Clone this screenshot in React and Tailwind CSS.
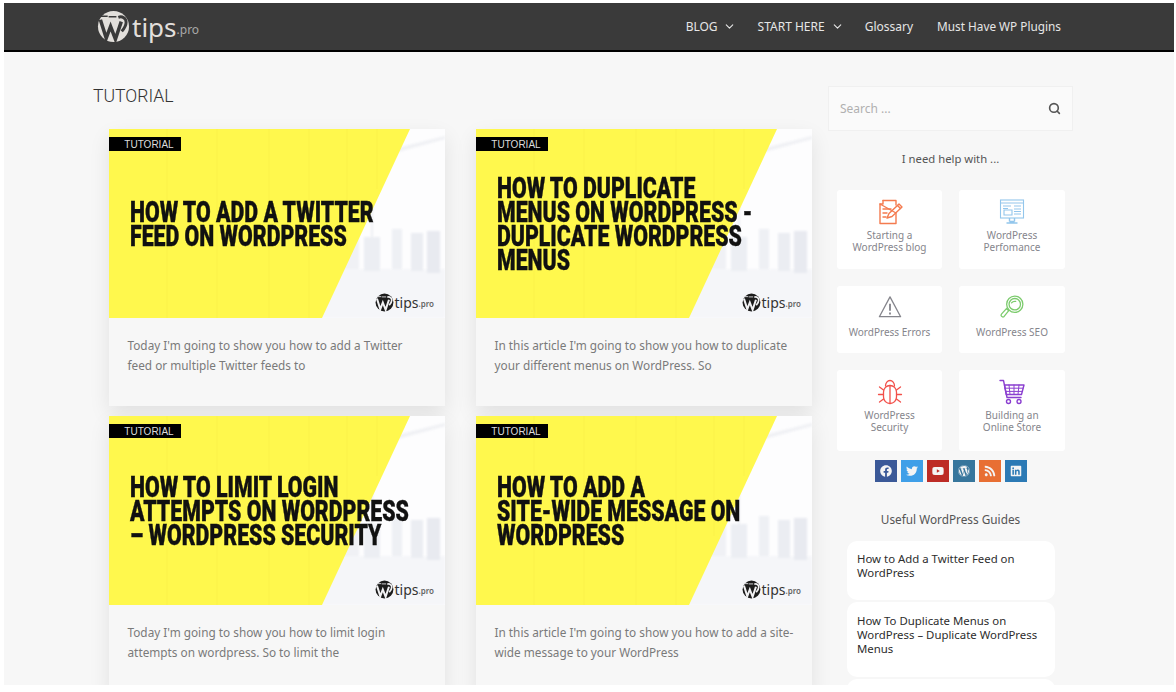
import React from "react";
import { ChevronDown, Search } from "lucide-react";
import { FaFacebook, FaTwitter, FaYoutube, FaWordpress, FaRss, FaLinkedin } from "react-icons/fa";

const posts = [
  {
    title: ["HOW TO ADD A TWITTER", "FEED ON WORDPRESS"],
    text: ["Today I'm going to show you how to add a Twitter", "feed or multiple Twitter feeds to"],
  },
  {
    title: ["HOW TO DUPLICATE", "MENUS ON WORDPRESS -", "DUPLICATE WORDPRESS", "MENUS"],
    text: ["In this article I'm going to show you how to duplicate", "your different menus on WordPress. So"],
  },
  {
    title: ["HOW TO LIMIT LOGIN", "ATTEMPTS ON WORDPRESS", "– WORDPRESS SECURITY"],
    text: ["Today I'm going to show you how to limit login", "attempts on wordpress. So to limit the"],
  },
  {
    title: ["HOW TO ADD A", "SITE-WIDE MESSAGE ON", "WORDPRESS"],
    text: ["In this article I'm going to show you how to add a site-", "wide message to your WordPress"],
  },
];

// disc with the W cut in, the site logo
const LogoMark = ({ disc, ink, className }) => (
  <svg viewBox="0 0 34 34" className={className}>
    <circle cx="17" cy="17" r="16" fill={disc} />
    <path d="M3.5 10L9.5 29L14 17L19 30L25 12" fill="none" stroke={ink} strokeWidth="3.6" strokeLinejoin="miter" />
    <path d="M22 7.5C26 6 30 8.5 30 12.5C30 16 28 19 25.5 22" fill="none" stroke={ink} strokeWidth="3" />
    <path d="M1 6.5H11M12 7H20" stroke={ink} strokeWidth="1.5" />
  </svg>
);

// thin outline drawings from the help tiles
const WriteIcon = () => (
  <svg viewBox="0 0 26 26" className="mb-[4px] h-[26px] w-[26px]" fill="none" stroke="#f47b4f" strokeWidth="1.4" strokeLinejoin="round" strokeLinecap="round">
    <path d="M6 1.5H19V6M19 14V24.5H3V5Z" />
    <path d="M6 1.5V5H3" />
    <path d="M10 19L12 14.5L22 5L25 8L15 17.5Z" />
    <path d="M20.5 6.5L23.5 9.5" />
    <path d="M6 10H14M6 14H10M6 18H9" />
  </svg>
);

const MonitorIcon = () => (
  <svg viewBox="0 0 26 26" className="mb-[4px] h-[26px] w-[26px]" fill="none" stroke="#93c6ec" strokeWidth="1.1">
    <rect x="1.5" y="1" width="23" height="18" />
    <path d="M1.5 4H24.5M4 7H12M15 7H22M4 9.5H9M5 11H13V16H5ZM15 10H22M15 12.5H22M15 15H22" />
    <path d="M10.5 19V22.5M15.5 19V22.5M7.5 24H18.5M10.5 22.5H15.5" strokeWidth="1.4" />
  </svg>
);

const WarningIcon = () => (
  <svg viewBox="0 0 26 26" className="mb-[7px] h-[24px] w-[24px]" fill="none" stroke="#85858c" strokeWidth="1.4" strokeLinejoin="round">
    <path d="M13 2L24.5 23.5H1.5Z" />
    <path d="M13 9.5V17M13 19V21" strokeWidth="2" />
  </svg>
);

const SeoIcon = () => (
  <svg viewBox="0 0 26 26" className="mb-[7px] h-[24px] w-[24px]" fill="none" stroke="#7ccb6d" strokeWidth="1.4" strokeLinecap="round">
    <circle cx="16" cy="10" r="8.8" />
    <circle cx="16" cy="10" r="6.2" />
    <path d="M12.5 8.5C13.5 7.2 15 6.8 17 7" />
    <path d="M9.5 17L7 14.8L1.8 20.5C1 21.4 1 22.4 1.8 23.2C2.6 24 3.6 24 4.5 23.2Z" />
  </svg>
);

const BugIcon = () => (
  <svg viewBox="0 0 26 26" className="mb-[4px] h-[26px] w-[26px]" fill="none" stroke="#f2504a" strokeWidth="1.3" strokeLinecap="round">
    <rect x="6.5" y="6.5" width="13" height="18" rx="6.5" />
    <path d="M13 6.5V24.5" />
    <path d="M8.5 7C8.5 4 10.5 1.5 13 1.5C15.5 1.5 17.5 4 17.5 7" />
    <path d="M6.5 11L2.5 8M5.8 15.5H1.5M6.5 20L2.5 23M19.5 11L23.5 8M20.2 15.5H24.5M19.5 20L23.5 23" />
  </svg>
);

const CartIcon = () => (
  <svg viewBox="0 0 26 26" className="mb-[4px] h-[26px] w-[26px]" fill="none" stroke="#8b3fd0" strokeWidth="1.4" strokeLinejoin="round" strokeLinecap="round">
    <path d="M1 1.5H4.5L8 18.5H22" />
    <path d="M5.5 6H25L22.5 15.5H7.2Z" />
    <path d="M5.8 9.2H24M6.5 12.4H23.2M10 6L11 15.5M15 6V15.5M20 6L19 15.5" strokeWidth="1" />
    <circle cx="9.5" cy="22.5" r="2" />
    <circle cx="20" cy="22.5" r="2" />
  </svg>
);

const helpRows = [
  {
    height: "h-[79px]",
    items: [
      { icon: WriteIcon, label: ["Starting a", "WordPress blog"] },
      { icon: MonitorIcon, label: ["WordPress", "Perfomance"] },
    ],
  },
  {
    height: "h-[67px]",
    items: [
      { icon: WarningIcon, label: ["WordPress Errors"] },
      { icon: SeoIcon, label: ["WordPress SEO"] },
    ],
  },
  {
    height: "h-[81px]",
    items: [
      { icon: BugIcon, label: ["WordPress", "Security"] },
      { icon: CartIcon, label: ["Building an", "Online Store"] },
    ],
  },
];

const socials = [
  { icon: FaFacebook, bg: "bg-[#3b5998]" },
  { icon: FaTwitter, bg: "bg-[#3f9fe8]" },
  { icon: FaYoutube, bg: "bg-[#bd2c26]" },
  { icon: FaWordpress, bg: "bg-[#37769c]" },
  { icon: FaRss, bg: "bg-[#e86f33]" },
  { icon: FaLinkedin, bg: "bg-[#2c7ab5]" },
];

const PostArt = () => (
  <svg className="absolute inset-0 h-full w-full" viewBox="0 0 336 189" preserveAspectRatio="none">
    <rect width="336" height="189" fill="#fdfdfe" />
    <g className="blur-[1px]">
      <rect x="180" y="140" width="156" height="49" fill="#f5f6f9" />
      <path d="M245 30 L336 7 L336 10 L245 35 Z" fill="#eff0f4" />
      <rect x="262" y="28" width="2" height="110" fill="#eff0f4" />
      <rect x="205" y="108" width="14" height="32" fill="#eef0f4" />
      <rect x="232" y="92" width="18" height="48" fill="#f0f1f5" />
      <rect x="255" y="108" width="16" height="34" fill="#eceef3" />
      <rect x="283" y="100" width="10" height="40" fill="#eef0f4" />
      <rect x="302" y="104" width="12" height="38" fill="#ebedf2" />
      <rect x="318" y="102" width="13" height="42" fill="#e8eaf0" />
    </g>
    <path d="M301 0 L213 189 L0 189 L0 0 Z" fill="#fff84d" />
    <path d="M58 0V189M108 0V189M160 0V189M200 0V189M238 0V120M268 0V60" stroke="#fbf24a" strokeWidth="1" />
  </svg>
);

const PostCard = ({ post }) => (
  <article className="h-[277px] w-[336px] shrink-0 bg-[#f7f7f7] shadow-[0_8px_20px_rgba(0,0,0,0.09)]">
    <div className="relative flex h-[189px] items-center overflow-hidden pl-[21px]">
      <PostArt />
      <div className="absolute left-0 top-[8px] flex h-[14px] w-[72px] items-center justify-center bg-black pl-[8px] font-['Liberation_Sans'] text-[10px] text-[#dcdcdc]">
        TUTORIAL
      </div>
      <h2 className="relative font-['Roboto'] text-[30px] font-black leading-[24px] text-[#111] [-webkit-text-stroke:0.4px_#111]">
        {post.title.map((line) => (
          <span key={line} className="block origin-left scale-x-[0.71] whitespace-nowrap">
            {line}
          </span>
        ))}
      </h2>
      <div className="absolute bottom-[6px] right-[11px] flex items-center">
        <LogoMark disc="#1c1c1c" ink="#f2f2f4" className="mr-[1px] h-[19px] w-[19px]" />
        <span className="font-['Noto_Sans'] text-[14px] leading-none text-[#333]">tips</span>
        <span className="mt-[3px] font-['Noto_Sans'] text-[8px] font-semibold leading-none text-[#666]">.pro</span>
      </div>
    </div>
    <p className="pl-[18.5px] pt-[17px] font-['Noto_Sans'] text-[11.8px] leading-[20px] text-[#7a7a7a]">
      {post.text.map((line) => (
        <span key={line} className="block whitespace-nowrap">
          {line}
        </span>
      ))}
    </p>
  </article>
);

const App = () => {
  return (
    <div className="h-[692px] w-[1176px] overflow-hidden bg-white pl-[4px] pr-[2px] pt-[3px] font-['Noto_Sans']">
      <header className="flex h-[49px] items-center justify-between border-b-2 border-black bg-[#3a3a3a] pl-[93px] pr-[113px]">
        <div className="flex items-center">
          <LogoMark disc="#e2dfdb" ink="#3a3a3a" className="h-[33px] w-[33px]" />
          <span className="ml-[2px] text-[26px] leading-none text-[#e2dfdb]">tips</span>
          <span className="mt-[7px] text-[12px] leading-none text-[#a9a9a9]">.pro</span>
        </div>
        <nav className="flex items-center text-[12px] text-[#e6e6e6]">
          <span>BLOG</span>
          <ChevronDown className="ml-[5px] mr-[22px] h-[13px] w-[13px]" />
          <span>START HERE</span>
          <ChevronDown className="ml-[6px] mr-[21px] h-[13px] w-[13px]" />
          <span className="mr-[24px]">Glossary</span>
          <span className="text-[11.8px]">Must Have WP Plugins</span>
        </nav>
      </header>

      <main className="flex h-[633px] items-start overflow-hidden bg-[#f7f7f7] pl-[89px]">
        <section className="w-[735px] shrink-0">
          <h1 className="mt-[32px] font-['Roboto'] text-[17.6px] font-light leading-[24px] text-[#333]">TUTORIAL</h1>
          <div className="ml-[16px] mt-[21px] grid grid-cols-[336px_336px] gap-x-[31px] gap-y-[10px]">
            {posts.map((post) => (
              <PostCard key={post.title[0]} post={post} />
            ))}
          </div>
        </section>

        <aside className="mt-[34px] w-[245px] shrink-0">
          <div className="flex h-[45px] items-center justify-between border border-[#f0f0f0] bg-[#fafafa] pl-[11px] pr-[11px]">
            <span className="text-[12px] text-[#b0b0b0]">Search ...</span>
            <Search className="h-[13px] w-[13px] text-[#555]" strokeWidth={3} />
          </div>
          <p className="mt-[19px] text-center text-[11.3px] leading-[18px] text-[#555]">I need help with ...</p>

          <div className="ml-[9px] mt-[22px] flex w-[228px] flex-col gap-[17px]">
            {helpRows.map((row) => (
              <div key={row.height} className="flex gap-[17px]">
                {row.items.map((item) => (
                  <div
                    key={item.label.join(" ")}
                    className={`flex w-[105px] flex-col items-center rounded-[3px] bg-white pt-[9px] text-center text-[10px] leading-[12px] text-[#85858c] last:w-[106px] ${row.height}`}
                  >
                    <item.icon />
                    {item.label.map((line) => (
                      <span key={line} className="block whitespace-nowrap">
                        {line}
                      </span>
                    ))}
                  </div>
                ))}
              </div>
            ))}
          </div>

          <div className="ml-[47px] mt-[9px] flex gap-[4px]">
            {socials.map((s, i) => (
              <div key={i} className={`flex h-[22px] w-[22px] items-center justify-center ${s.bg}`}>
                <s.icon className="text-[12px] text-[#f4f4f4]" />
              </div>
            ))}
          </div>

          <p className="mt-[28px] text-center text-[11.8px] leading-[18px] text-[#555]">Useful WordPress Guides</p>

          <div className="ml-[19px] mt-[13px] flex w-[208px] flex-col gap-[2px]">
            <div className="h-[59px] whitespace-nowrap rounded-[10px] bg-white px-[10px] pt-[11px] text-[11.4px] leading-[14px] text-[#2d2d2d]">
              How to Add a Twitter Feed on
              <br />
              WordPress
            </div>
            <div className="h-[75px] whitespace-nowrap rounded-[10px] bg-white px-[10px] pt-[12px] text-[11.4px] leading-[14px] text-[#2d2d2d]">
              How To Duplicate Menus on
              <br />
              WordPress – Duplicate WordPress
              <br />
              Menus
            </div>
            <div className="h-[30px] rounded-[10px] bg-white" />
          </div>
        </aside>
      </main>
    </div>
  );
};

export default App;
